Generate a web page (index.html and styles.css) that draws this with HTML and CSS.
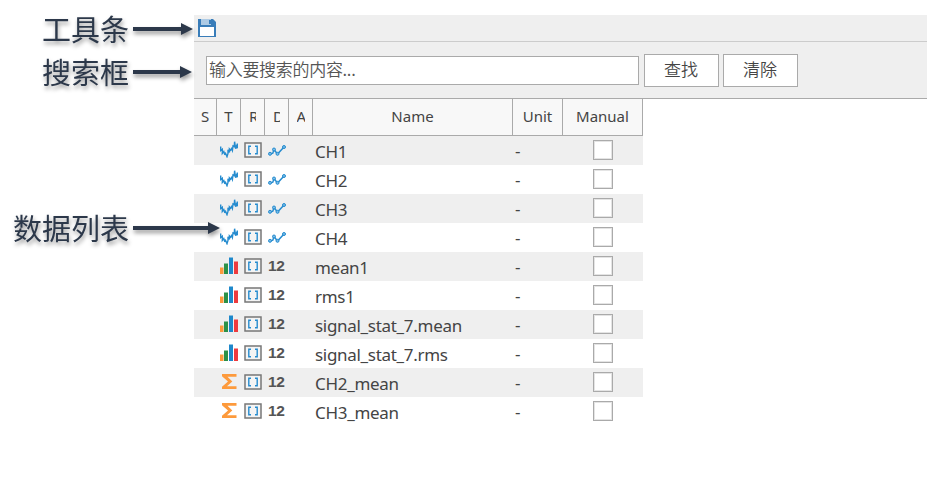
FILE: index.html
```html
<!DOCTYPE html>
<html lang="zh-CN">
<head>
<meta charset="utf-8">
<title>数据列表</title>
<link rel="stylesheet" href="styles.css">
</head>
<body>
<svg class="defs" aria-hidden="true">
  <symbol id="wave" viewBox="0 0 18 18"><path d="M.7 6.500v4l1.600-1.300v4.300l1.500-2 .8 2.500.9-.8 1.500 3.500 1-3.300V9.800l1.400 2.600V8.800l1.200 1.400 1-1.600.8 1.900.6-4.700 1.200.700.400-4.800 1 7 .8-2.500.900 2V3.500" fill="none" stroke="#268ccf" stroke-width="1.400"/></symbol>
  <symbol id="range" viewBox="0 0 18 16"><path d="M1 1h16v14H1z" fill="#f4f4f4" stroke="#777" stroke-width="1.500"/><path d="M7 4.300H4.800v7.400H7M11 4.300h2.200v7.400H11" fill="none" stroke="#268ccf" stroke-width="1.400"/></symbol>
  <symbol id="line" viewBox="0 0 18 11"><path d="M2 9l2.800-.8L6 4.500 9.500 9 16 2" fill="none" stroke="#268ccf" stroke-width="1.500"/><g fill="#79bce8" stroke="#268ccf" stroke-width="1"><circle cx="2" cy="8.800" r="1.500"/><circle cx="6" cy="4.500" r="1.500"/><circle cx="9.500" cy="8.800" r="1.500"/><circle cx="16" cy="2" r="1.500"/></g></symbol>
  <symbol id="bars" viewBox="0 0 18 17"><path d="M0 10.500h3.500V17H0z" fill="#fd9a3c"/><path d="M4 6.500h4V17H4z" fill="#2c9148"/><path d="M9 .5h4V17H9z" fill="#1e88cb"/><path d="M14 4.500h4V17h-4z" fill="#ee3b3f"/></symbol>
  <symbol id="sigma" viewBox="0 0 15 15"><path d="M0 0h14.500v2.800H5.500L10.300 7.400 5 12.200h9.500V15H0v-2.200L6 7.400 0 2.200z" fill="#fd9a3c"/></symbol>
</svg>
<div class="page">
  <aside class="notes">
    <div class="note"><span>工具条</span><svg class="arrow" width="60" height="12"><path d="M0 4h48V0l12 6-12 6V8H0z"/></svg></div>
    <div class="note search-note"><span>搜索框</span><svg class="arrow" width="59" height="12"><path d="M0 4h47V0l12 6-12 6V8H0z"/></svg></div>
    <div class="note list-note"><span>数据列表</span><svg class="arrow" width="87" height="12"><path d="M0 4h75V0l12 6-12 6V8H0z"/></svg></div>
  </aside>
  <main class="panel">
    <div class="toolbar">
      <svg width="18" height="18" viewBox="0 0 18 18"><path d="M0 0h15l3 3v15H0z" fill="#397db9"/><path d="M3 0h10v6H3z" fill="#aecbe5"/><path d="M11 1h2v4h-2z" fill="#397db9"/><path d="M2 8h14v9H2z" fill="#fff"/></svg>
    </div>
    <div class="search"><input type="text" placeholder="输入要搜索的内容..."><button>查找</button><button>清除</button></div>
    <div class="table">
      <div class="head"><div>S</div><div>T</div><div class="clip"><span class="cut-r">R</span></div><div class="clip"><span class="cut-d">D</span></div><div class="clip"><span class="cut-a">A</span></div><div>Name</div><div>Unit</div><div>Manual</div></div>
      <div id="rows"></div>
    </div>
  </main>
</div>
<script src="script.js"></script>
</body>
</html>
```
FILE: styles.css
```css
* { box-sizing: border-box; }
body { margin: 0; background: #fff; color: #444; font-family: "Noto Sans", "Noto Sans CJK SC", sans-serif; overflow: hidden; }
svg { display: block; flex: none; }
.defs { display: none; }
.page { display: grid; grid-template-columns: 194px 1fr; height: 485px; padding-top: 15px; }
.notes { z-index: 1; width: 194px; }
.note { display: grid; grid-template-columns: 130px auto; column-gap: 3px; align-items: center; height: 28px; color: #2c384a; font: 400 29px/26px "Noto Sans CJK SC", sans-serif; filter: drop-shadow(1px 3px 2px rgba(0, 0, 0, .4)); }
.note span { padding: 0 1px 2px 0; text-align: right; white-space: nowrap; }
.search-note { margin-top: 15px; }
.list-note { margin-top: 128px; }
.arrow { fill: #2c384a; overflow: visible; }
.panel { min-width: 0; }
.toolbar { height: 27px; padding: 4px; background: #efefef; border-bottom: 1px solid #ccc; }
.search { display: flex; align-items: center; height: 57px; padding: 0 0 0 12px; background: #efefef; border-bottom: 1px solid #aaa; }
.search input { width: 433px; height: 29px; margin: 0 5px 0 0; padding: 0 2px 3px 2px; border: 1px solid #aaa; border-radius: 0; background: #fff; font: 350 17px "Noto Sans CJK SC", sans-serif; letter-spacing: -.3px; }
.search input::placeholder { color: #555; opacity: 1; }
.search button { width: 75px; height: 33px; margin: 0 4px 0 0; padding: 0 1px 2px 0; border: 1px solid #aaa; border-radius: 0; background: #fff; color: #444; font: 350 17px/28px "Noto Sans CJK SC", sans-serif; }
.table { width: 449px; }
.head, .row { display: grid; grid-template-columns: 23px 24px 24px 24px 24px 200px 50px 80px; }
.head { height: 37px; background: #f8f8f8; border-bottom: 1px solid #aaa; font-size: 15px; line-height: 34px; text-align: center; }
.head > div { border-right: 1px solid #aaa; }
.clip { display: flex; justify-content: center; }
.clip span { width: 8px; overflow: hidden; text-align: left; }
.clip .cut-r, .clip .cut-d { width: 7px; }
.row { height: 29px; align-items: center; font-size: 17px; line-height: 29px; }
.row:nth-child(odd) { background: #efefef; }
.type { display: flex; align-items: center; height: 29px; padding: 0 0 3px 3px; }
.type .sigma { margin-left: 2px; }
.span-cell { padding: 0 0 1px 3px; }
.dim { padding: 0 0 1px 3px; }
.dim b { display: block; height: 28px; font: bold 15.5px/28px "Liberation Sans", sans-serif; letter-spacing: -.3px; color: #555; }
.name { position: relative; top: 1px; padding-left: 2px; letter-spacing: -.3px; white-space: nowrap; }
.unit { padding-left: 2px; }
.check { display: block; width: 20px; height: 20px; margin: 0 auto 2px 30px; appearance: none; border: 1px solid #aaa; box-shadow: inset 0 0 0 1px #e4e4e4; background: #fff; }
```
FILE: script.js
```js
const rows = [
  ["CH1", "wave"], ["CH2", "wave"], ["CH3", "wave"], ["CH4", "wave"],
  ["mean1", "bars"], ["rms1", "bars"], ["signal_stat_7.mean", "bars"], ["signal_stat_7.rms", "bars"],
  ["CH2_mean", "sigma"], ["CH3_mean", "sigma"]
];
const sizes = { wave: [18, 18], bars: [18, 17], sigma: [15, 15], range: [18, 16], line: [18, 11] };
const icon = id => `<svg class="${id}" width="${sizes[id][0]}" height="${sizes[id][1]}"><use href="#${id}"/></svg>`;
document.getElementById("rows").innerHTML = rows.map(([name, type]) => `
  <div class="row"><div></div><div class="type">${icon(type)}</div><div class="span-cell">${icon("range")}</div>
  <div class="dim">${type === "wave" ? icon("line") : "<b>12</b>"}</div><div></div>
  <div class="name">${name}</div><div class="unit">-</div><input class="check" type="checkbox"></div>`).join("");
```
